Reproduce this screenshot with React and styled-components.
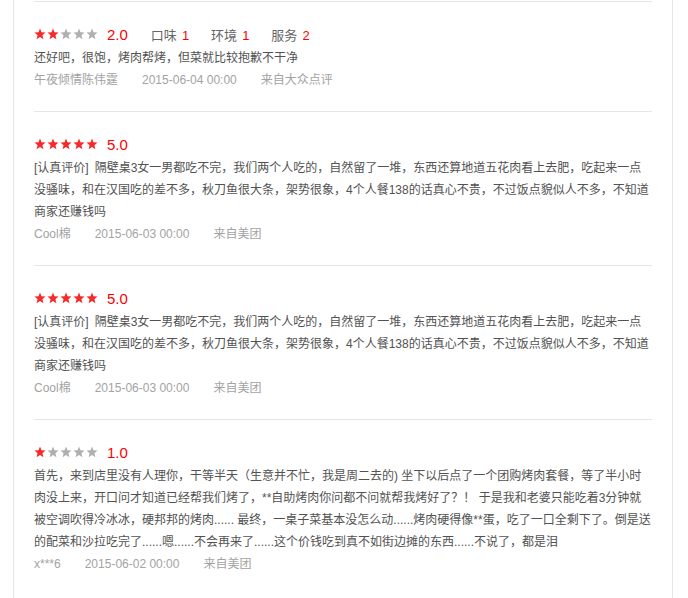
import React from "react";
import styled, { createGlobalStyle } from "styled-components";

// *** global
const GlobalStyle = createGlobalStyle`
  html, body {
    margin: 0;
    padding: 0;
    background: #fff;
  }
  body {
    font-family: "Liberation Sans", "Noto Sans CJK SC", sans-serif;
    font-size: 12px;
    color: #555;
  }
`;

// *** data
const longReview =
  "[认真评价]\u2002隔壁桌3女一男都吃不完，我们两个人吃的，自然留了一堆，东西还算地道五花肉看上去肥，吃起来一点没骚味，和在汉国吃的差不多，秋刀鱼很大条，架势很象，4个人餐138的话真心不贵，不过饭点貌似人不多，不知道商家还赚钱吗";

const reviews = [
  {
    star: 2,
    score: "2.0",
    subs: [
      { label: "口味", value: 1 },
      { label: "环境", value: 1 },
      { label: "服务", value: 2 },
    ],
    text: "还好吧，很饱，烤肉帮烤，但菜就比较抱歉不干净",
    user: "午夜倾情陈伟霆",
    date: "2015-06-04 00:00",
    source: "来自大众点评",
  },
  {
    star: 5,
    score: "5.0",
    text: longReview,
    user: "Cool棉",
    date: "2015-06-03 00:00",
    source: "来自美团",
  },
  {
    star: 5,
    score: "5.0",
    text: longReview,
    user: "Cool棉",
    date: "2015-06-03 00:00",
    source: "来自美团",
  },
  {
    star: 1,
    score: "1.0",
    text: "首先，来到店里没有人理你，干等半天（生意并不忙，我是周二去的) 坐下以后点了一个团购烤肉套餐，等了半小时肉没上来，开口问才知道已经帮我们烤了，**自助烤肉你问都不问就帮我烤好了？！ 于是我和老婆只能吃着3分钟就被空调吹得冷冰冰，硬邦邦的烤肉...... 最终，一桌子菜基本没怎么动......烤肉硬得像**蛋，吃了一口全剩下了。倒是送的配菜和沙拉吃完了......嗯......不会再来了......这个价钱吃到真不如街边摊的东西......不说了，都是泪",
    user: "x***6",
    date: "2015-06-02 00:00",
    source: "来自美团",
  },
];

// *** styled components
const Panel = styled.div`
  width: 618px;
  min-height: 598px;
  margin-left: 13px;
  padding: 1px 20px 0;
  border-left: 1px solid #e6e6e6;
  border-right: 1px solid #e6e6e6;
`;
const Item = styled.div`
  border-top: 1px solid #e6e6e6;
  padding: 19px 0 20px;
`;
const Head = styled.div`
  display: flex;
  align-items: center;
  height: 26px;
`;
const Stars = styled.div`
  display: flex;
  gap: 1px;
`;
const Score = styled.span`
  margin-left: 9px;
  font-size: 15px;
  color: #f00;
`;
const Sub = styled.span`
  font-size: 13px;
  color: #666;
  margin-left: ${(p) => (p.$first ? "23px" : "22px")};

  b {
    font-weight: normal;
    color: #f00;
    margin-left: 5px;
  }
`;
const Text = styled.p`
  margin: 0;
  line-height: 22px;
  color: #525252;
  word-break: break-all;
`;
const Meta = styled.div`
  display: flex;
  gap: 24px;
  line-height: 22px;
  color: #a3a3a3;
`;

const Star = ({ on }) => (
  <svg width="12" height="12" viewBox="0 0 24 24">
    <polygon
      points="12,1 15,8.6 23,9.2 16.9,14.4 18.8,22.4 12,18.1 5.2,22.4 7.1,14.4 1,9.2 9,8.6"
      fill={on ? "#f52b2b" : "#b0b0b0"}
    />
  </svg>
);

const App = () => (
  <>
    <GlobalStyle />
    <Panel>
      {reviews.map((r, i) => (
        <Item key={i}>
          <Head>
            <Stars>
              {[0, 1, 2, 3, 4].map((n) => (
                <Star key={n} on={n < r.star} />
              ))}
            </Stars>
            <Score>{r.score}</Score>
            {r.subs &&
              r.subs.map((s, j) => (
                <Sub key={j} $first={j === 0}>
                  {s.label}
                  <b>{s.value}</b>
                </Sub>
              ))}
          </Head>
          <Text>{r.text}</Text>
          <Meta>
            <span>{r.user}</span>
            <span>{r.date}</span>
            <span>{r.source}</span>
          </Meta>
        </Item>
      ))}
    </Panel>
  </>
);

export default App;
